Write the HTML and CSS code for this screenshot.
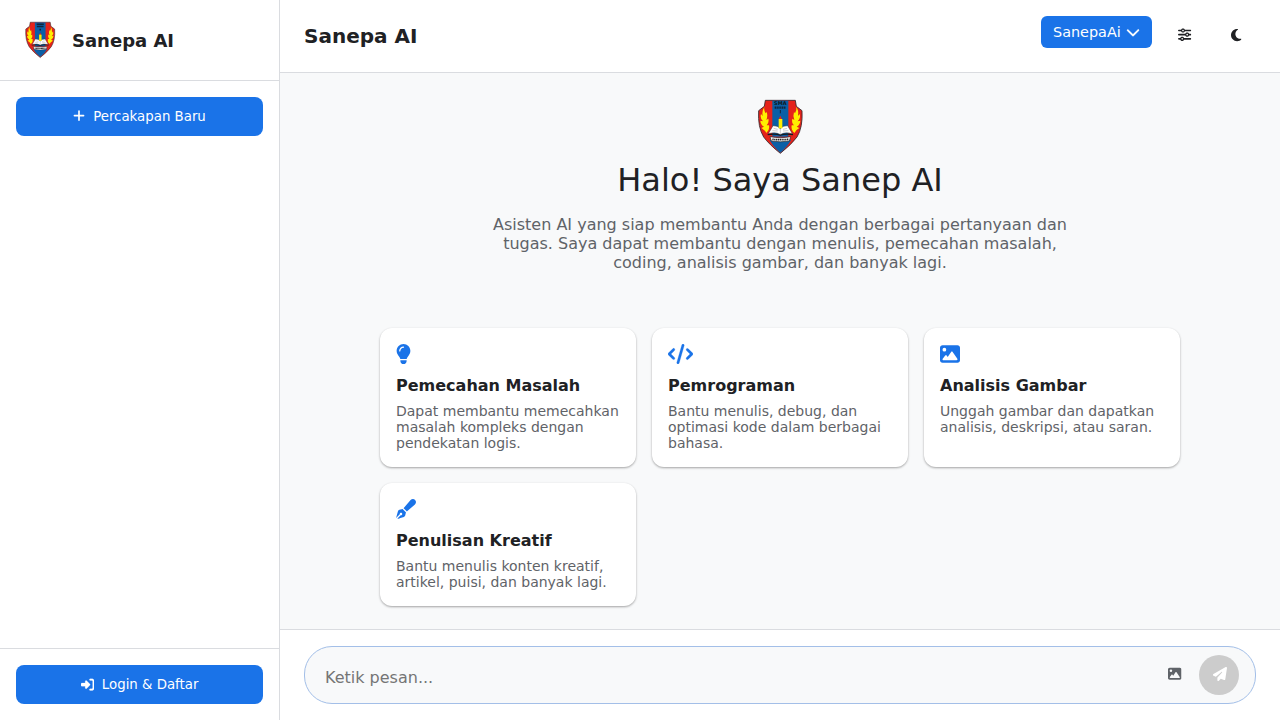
FILE: index.html
```html
<!DOCTYPE html>
<html lang="id">
<head>
<meta charset="utf-8">
<title>Sanepa AI</title>
<link rel="stylesheet" href="styles.css">
</head>
<body>
<svg class="defs" aria-hidden="true">
  <symbol id="logo" viewBox="15 21 180 180">
    <path d="M61 31H151L154 49L171 62Q174 112 156 141Q140 163 106 190Q72 163 56 141Q38 112 41 62L58 49Z" fill="#e5231b" stroke="#33272b" stroke-width="2.5"/>
    <path d="M82 32H130V140H82Z" fill="#0a5fa6"/>
    <path d="M74 150H138Q128 170 106 188Q84 170 74 150Z" fill="#0a5fa6"/>
    <path id="flame" d="M58 51Q56 62 62 70L65 66Q69 78 64 90L70 86Q73 98 65 106L72 106Q75 119 64 129Q60 120 49 114L57 110Q47 104 46 92L54 94Q44 84 48 72L53 78Q50 62 58 51Z" fill="#fff000"/>
    <use href="#flame" transform="translate(212 0) scale(-1 1)"/>
    <path d="M101 88L106 77L111 88Z" fill="#e5231b"/>
    <path d="M84 107Q98 106 106 116Q114 106 128 107L142 131Q118 125 106 134Q94 125 70 131Z" fill="#fff" stroke="#333" stroke-width="1.5"/>
    <path d="M106 116V134M86 115L98 118M82 122L98 123M126 115L114 118M130 122L114 123" stroke="#999" stroke-width="1.5" fill="none"/>
    <rect x="101" y="87" width="11" height="28" fill="#fff000"/>
    <path d="M68 134Q92 130 106 136Q120 130 144 134" stroke="#16191d" stroke-width="3.5" fill="none"/>
    <path d="M75 140Q92 143 106 143Q120 143 137 140L133 153Q106 158 79 153Z" fill="#fff" stroke="#222" stroke-width="2"/>
    <path d="M82 148Q106 150 130 148" stroke="#222" stroke-width="5" stroke-dasharray="4 1.5" fill="none"/>
  </symbol>
  <symbol id="plus" viewBox="0 0 448 512"><path d="M256 80c0-17.7-14.3-32-32-32s-32 14.3-32 32V224H48c-17.7 0-32 14.3-32 32s14.3 32 32 32H192V432c0 17.7 14.3 32 32 32s32-14.3 32-32V288H400c17.7 0 32-14.3 32-32s-14.3-32-32-32H256V80z"/></symbol>
  <symbol id="login" viewBox="0 0 512 512"><path d="M217.9 105.9L340.7 228.7c7.2 7.2 11.3 17.1 11.3 27.3s-4.1 20.1-11.3 27.3L217.9 406.1c-6.4 6.4-15 9.9-24 9.9c-18.7 0-33.9-15.2-33.9-33.9l0-62.1L32 320c-17.7 0-32-14.3-32-32l0-64c0-17.7 14.3-32 32-32l128 0 0-62.1c0-18.7 15.2-33.9 33.9-33.9c9 0 17.6 3.6 24 9.9zM352 416l64 0c17.7 0 32-14.3 32-32l0-256c0-17.7-14.3-32-32-32l-64 0c-17.7 0-32-14.3-32-32s14.3-32 32-32l64 0c53 0 96 43 96 96l0 256c0 53-43 96-96 96l-64 0c-17.7 0-32-14.3-32-32s14.3-32 32-32z"/></symbol>
  <symbol id="chevron" viewBox="0 0 512 512"><path d="M233.4 406.6c12.5 12.5 32.8 12.5 45.3 0l192-192c12.5-12.5 12.5-32.8 0-45.3s-32.8-12.5-45.3 0L256 338.7 86.6 169.4c-12.5-12.5-32.8-12.5-45.3 0s-12.5 32.8 0 45.3l192 192z"/></symbol>
  <symbol id="sliders" viewBox="0 0 512 512"><path d="M0 416c0 17.7 14.3 32 32 32l54.7 0c12.3 28.3 40.5 48 73.3 48s61-19.7 73.3-48L480 448c17.7 0 32-14.3 32-32s-14.3-32-32-32l-246.7 0c-12.3-28.3-40.5-48-73.3-48s-61 19.7-73.3 48L32 384c-17.7 0-32 14.3-32 32zm128 0a32 32 0 1 1 64 0 32 32 0 1 1 -64 0zM320 256a32 32 0 1 1 64 0 32 32 0 1 1 -64 0zm32-80c-32.8 0-61 19.7-73.3 48L32 224c-17.7 0-32 14.3-32 32s14.3 32 32 32l246.7 0c12.3 28.3 40.5 48 73.3 48s61-19.7 73.3-48l54.7 0c17.7 0 32-14.3 32-32s-14.3-32-32-32l-54.7 0c-12.3-28.3-40.5-48-73.3-48zM192 128a32 32 0 1 1 0-64 32 32 0 1 1 0 64zm73.3-64C253 35.7 224.8 16 192 16s-61 19.7-73.3 48L32 64C14.3 64 0 78.3 0 96s14.3 32 32 32l86.7 0c12.3 28.3 40.5 48 73.3 48s61-19.7 73.3-48L480 128c17.7 0 32-14.3 32-32s-14.3-32-32-32L265.3 64z"/></symbol>
  <symbol id="moon" viewBox="0 0 384 512"><path d="M223.5 32C100 32 0 132.3 0 256S100 480 223.5 480c60.6 0 115.5-24.2 155.8-63.4c5-4.9 6.3-12.5 3.1-18.7s-10.1-9.7-17-8.5c-9.8 1.7-19.8 2.6-30.1 2.6c-96.9 0-175.5-78.8-175.5-176c0-65.8 36-123.1 89.3-153.3c6.1-3.5 9.2-10.5 7.7-17.3s-7.3-11.9-14.3-12.5c-6.3-.5-12.6-.8-19-.8z"/></symbol>
  <symbol id="bulb" viewBox="0 0 384 512"><path d="M272 384c9.6-31.9 29.5-59.1 49.2-86.2l0 0c5.2-7.1 10.4-14.2 15.4-21.4c19.8-28.5 31.4-63 31.4-100.3C368 78.8 289.2 0 192 0S16 78.8 16 176c0 37.3 11.6 71.9 31.4 100.3c5 7.2 10.2 14.3 15.4 21.4l0 0c19.8 27.1 39.7 54.4 49.2 86.2H272zM192 512c44.2 0 80-35.8 80-80V416H112v16c0 44.2 35.8 80 80 80zM112 176c0 8.8-7.2 16-16 16s-16-7.2-16-16c0-61.9 50.1-112 112-112c8.8 0 16 7.2 16 16s-7.2 16-16 16c-44.2 0-80 35.8-80 80z"/></symbol>
  <symbol id="code" viewBox="0 0 640 512"><path d="M392.8 1.2c-17-4.9-34.7 5-39.6 22l-128 448c-4.9 17 5 34.7 22 39.6s34.7-5 39.6-22l128-448c4.9-17-5-34.7-22-39.6zm80.6 120.1c-12.5 12.5-12.5 32.8 0 45.3L562.7 256l-89.4 89.4c-12.5 12.5-12.5 32.8 0 45.3s32.8 12.5 45.3 0l112-112c12.5-12.5 12.5-32.8 0-45.3l-112-112c-12.5-12.5-32.8-12.5-45.3 0zm-306.7 0c-12.5-12.5-32.8-12.5-45.3 0l-112 112c-12.5 12.5-12.5 32.8 0 45.3l112 112c12.5 12.5 32.8 12.5 45.3 0s12.5-32.8 0-45.3L77.3 256l89.4-89.4c12.5-12.5 12.5-32.8 0-45.3z"/></symbol>
  <symbol id="image" viewBox="0 0 512 512"><path d="M0 96C0 60.7 28.7 32 64 32H448c35.3 0 64 28.7 64 64V416c0 35.3-28.7 64-64 64H64c-35.3 0-64-28.7-64-64V96zM323.8 202.5c-4.5-6.6-11.9-10.5-19.8-10.5s-15.4 3.9-19.8 10.5l-87 127.6L170.7 297c-4.6-5.7-11.5-9-18.7-9s-14.2 3.3-18.7 9l-64 80c-5.8 7.2-6.9 17.1-2.9 25.4s12.4 13.6 21.6 13.6h96 32H424c8.9 0 17.1-4.9 21.2-12.8s3.6-17.4-1.4-24.7l-120-176zM112 192a48 48 0 1 0 0-96 48 48 0 1 0 0 96z"/></symbol>
  <symbol id="pen" viewBox="0 0 512 512"><path d="M373.5 27.1C388.5 9.9 410.2 0 433 0c43.6 0 79 35.4 79 79c0 22.8-9.9 44.6-27.1 59.6L277.7 319l-10.3-10.3-64-64L193 234.3 373.5 27.1zM170.3 256.9l10.4 10.4 64 64 10.4 10.4-19.2 83.4c-3.9 17.1-16.9 30.7-33.8 35.4L24.4 510.3l95.4-95.4c2.6 .7 5.4 1.1 8.3 1.1c17.7 0 32-14.3 32-32s-14.3-32-32-32s-32 14.3-32 32c0 2.9 .4 5.6 1.1 8.3L1.7 487.6 51.5 310c4.7-16.9 18.3-29.9 35.4-33.8l83.4-19.3z"/></symbol>
  <symbol id="plane" viewBox="0 0 512 512"><path d="M498.1 5.6c10.1 7 15.4 19.1 13.5 31.2l-64 416c-1.5 9.7-7.4 18.2-16 23s-18.9 5.4-28 1.6L284 427.7l-68.5 74.1c-8.9 9.7-22.9 12.9-35.2 8.1S160 493.2 160 480V396.4c0-4 1.5-7.8 4.2-10.7L331.8 202.8c5.8-6.3 5.6-16-.4-22s-15.7-6.4-22-.7L106 360.8 17.7 316.6C7.1 311.3 .3 300.7 0 288.9s5.9-22.8 16.1-28.7l448-256c10.7-6.1 23.9-5.5 34 1.4z"/></symbol>
</svg>
<div class="app">
  <aside class="sidebar">
    <div class="brand">
      <svg class="brand-logo" viewBox="15 21 180 180">
        <use href="#logo" x="15" y="21" width="180" height="180"/>
        <path class="crest-mark" d="M90 40H122M91 50H121M106 60V68"/>
      </svg>
      <span class="brand-name">Sanepa AI</span>
    </div>
    <div class="sidebar-body">
      <button class="btn"><svg class="icon-plus"><use href="#plus"/></svg>Percakapan Baru</button>
    </div>
    <div class="sidebar-footer">
      <button class="btn"><svg class="icon-login"><use href="#login"/></svg>Login &amp; Daftar</button>
    </div>
  </aside>
  <main class="main">
    <header class="topbar">
      <div class="topbar-title">Sanepa AI</div>
      <div class="topbar-actions">
        <button class="model">SanepaAi<svg class="icon-chevron"><use href="#chevron"/></svg></button>
        <button class="icon-btn"><svg class="icon-sliders"><use href="#sliders"/></svg></button>
        <button class="icon-btn"><svg class="icon-moon"><use href="#moon"/></svg></button>
      </div>
    </header>
    <section class="welcome">
      <svg class="welcome-logo" viewBox="15 21 180 180">
        <use href="#logo" x="15" y="21" width="180" height="180"/>
        <text class="crest-name" x="106" y="46" text-anchor="middle">SMA</text>
        <path class="crest-mark" d="M89 53H123" stroke-dasharray="4 1.5"/>
        <path class="crest-mark crest-mark-thin" d="M106 60V70"/>
      </svg>
      <h1 class="welcome-title">Halo! Saya Sanep AI</h1>
      <p class="welcome-text">Asisten AI yang siap membantu Anda dengan berbagai pertanyaan dan tugas. Saya dapat membantu dengan menulis, pemecahan masalah, coding, analisis gambar, dan banyak lagi.</p>
      <div class="cards">
        <article class="card">
          <svg class="card-icon card-icon-narrow"><use href="#bulb"/></svg>
          <h2 class="card-title">Pemecahan Masalah</h2>
          <p class="card-text">Dapat membantu memecahkan masalah kompleks dengan pendekatan logis.</p>
        </article>
        <article class="card">
          <svg class="card-icon card-icon-wide"><use href="#code"/></svg>
          <h2 class="card-title">Pemrograman</h2>
          <p class="card-text">Bantu menulis, debug, dan optimasi kode dalam berbagai bahasa.</p>
        </article>
        <article class="card">
          <svg class="card-icon"><use href="#image"/></svg>
          <h2 class="card-title">Analisis Gambar</h2>
          <p class="card-text">Unggah gambar dan dapatkan analisis, deskripsi, atau saran.</p>
        </article>
        <article class="card">
          <svg class="card-icon"><use href="#pen"/></svg>
          <h2 class="card-title">Penulisan Kreatif</h2>
          <p class="card-text">Bantu menulis konten kreatif, artikel, puisi, dan banyak lagi.</p>
        </article>
      </div>
    </section>
    <footer class="composer">
      <div class="composer-box">
        <input class="composer-input" type="text" placeholder="Ketik pesan...">
        <button class="attach"><svg class="icon-attach"><use href="#image"/></svg></button>
        <button class="send"><svg class="icon-send"><use href="#plane"/></svg></button>
      </div>
    </footer>
  </main>
</div>
</body>
</html>
```
FILE: styles.css
```css
* { box-sizing: border-box; margin: 0; padding: 0; }
body {
  font-family: "DejaVu Sans", sans-serif;
  color: #202124;
  background: #fff;
  overflow: hidden;
}
svg { fill: currentColor; flex: none; display: block; }
button { font-family: inherit; border: 0; background: none; }
.defs { position: absolute; width: 0; height: 0; }
.crest-name { font-size: 15px; font-weight: 700; fill: #101820; }
.crest-mark { stroke: #10243c; stroke-width: 7; fill: none; }
.crest-mark-thin { stroke-width: 3; }

.app { display: flex; height: 100vh; }
.sidebar {
  width: 280px;
  flex: none;
  display: flex;
  flex-direction: column;
  border-right: 1px solid #dadce0;
}
.brand {
  display: flex;
  align-items: center;
  gap: 12px;
  height: 81px;
  padding: 0 20px;
  border-bottom: 1px solid #dadce0;
}
.brand-logo { width: 40px; height: 40px; }
.brand-name { font-size: 18px; font-weight: 700; line-height: 21px; }
.sidebar-body { flex: 1; padding: 16px; }
.sidebar-footer { padding: 16px; border-top: 1px solid #dadce0; }
.btn {
  display: flex;
  align-items: center;
  justify-content: center;
  gap: 8px;
  width: 100%;
  height: 39px;
  border-radius: 8px;
  background: #1a73e8;
  color: #fff;
  font-size: 13.333px;
}
.icon-plus { width: 12px; height: 13.333px; margin-top: -1px; }
.icon-login { width: 13.333px; height: 13.333px; stroke: currentColor; stroke-width: 8; }

.main { flex: 1; min-width: 0; display: flex; flex-direction: column; }
.topbar {
  display: flex;
  justify-content: space-between;
  height: 73px;
  padding: 16px 24px;
  border-bottom: 1px solid #dadce0;
}
.topbar-title { font-size: 20px; font-weight: 700; line-height: 40px; }
.topbar-actions { display: flex; gap: 15.5px; }
.model {
  display: flex;
  align-items: center;
  justify-content: space-between;
  width: 111px;
  height: 32px;
  padding: 0 12px;
  border-radius: 6px;
  background: #1a73e8;
  color: #fff;
  font-size: 14.4px;
}
.icon-chevron { width: 14px; height: 14px; stroke: currentColor; stroke-width: 8; overflow: visible; }
.icon-btn {
  display: flex;
  align-items: center;
  justify-content: center;
  width: 35px;
  height: 38px;
  color: #202124;
}
.icon-btn + .icon-btn { width: 38px; padding-right: 1px; }
.icon-sliders { width: 13.333px; height: 13.333px; }
.icon-moon { width: 10.5px; height: 14px; }

.welcome {
  flex: 1;
  display: flex;
  flex-direction: column;
  align-items: center;
  padding-top: 24px;
  background: #f8f9fa;
}
.welcome-logo { width: 60px; height: 60px; }
.welcome-title { margin-top: 4px; font-size: 32px; font-weight: 400; line-height: 38px; }
.welcome-text {
  width: 600px;
  margin-top: 16px;
  color: #5f6368;
  font-size: 16px;
  line-height: 19px;
  text-align: center;
}
.cards {
  display: grid;
  grid-template-columns: repeat(3, 256px);
  gap: 16px;
  margin-top: 56px;
}
.card {
  padding: 15.5px 16px 16px;
  border-radius: 12px;
  background: #fff;
  box-shadow: 0 1px 3px rgba(0, 0, 0, 0.12), 0 1px 2px rgba(0, 0, 0, 0.24);
}
.card-icon { width: 20px; height: 20px; color: #1a73e8; }
.card-icon-narrow { width: 15px; }
.card-icon-wide { width: 25px; stroke: currentColor; stroke-width: 6; }
.card-title { margin-top: 12.5px; font-size: 16px; font-weight: 700; line-height: 19px; }
.card-text { margin-top: 8px; color: #5f6368; font-size: 14px; line-height: 16px; }

.composer { padding: 16px 24px; border-top: 1px solid #dadce0; }
.composer-box {
  display: flex;
  align-items: center;
  height: 58px;
  padding: 0 16px 0 20px;
  border: 1px solid #a3bfe8;
  border-radius: 28px;
  background: #f8f9fa;
}
.composer-input {
  flex: 1;
  border: 0;
  outline: 0;
  background: none;
  color: #202124;
  font-family: inherit;
  font-size: 16px;
  padding-top: 4px;
}
.composer-input::placeholder { color: #757575; }
.attach { color: #5f6368; margin: -2px 17.5px 0 0; }
.icon-attach { width: 13.5px; height: 13.5px; }
.send {
  display: flex;
  align-items: center;
  justify-content: center;
  width: 40px;
  height: 40px;
  border-radius: 50%;
  background: #ccc;
  color: #fff;
}
.icon-send { width: 14px; height: 14px; margin: -2px 0 0 1px; }
```
